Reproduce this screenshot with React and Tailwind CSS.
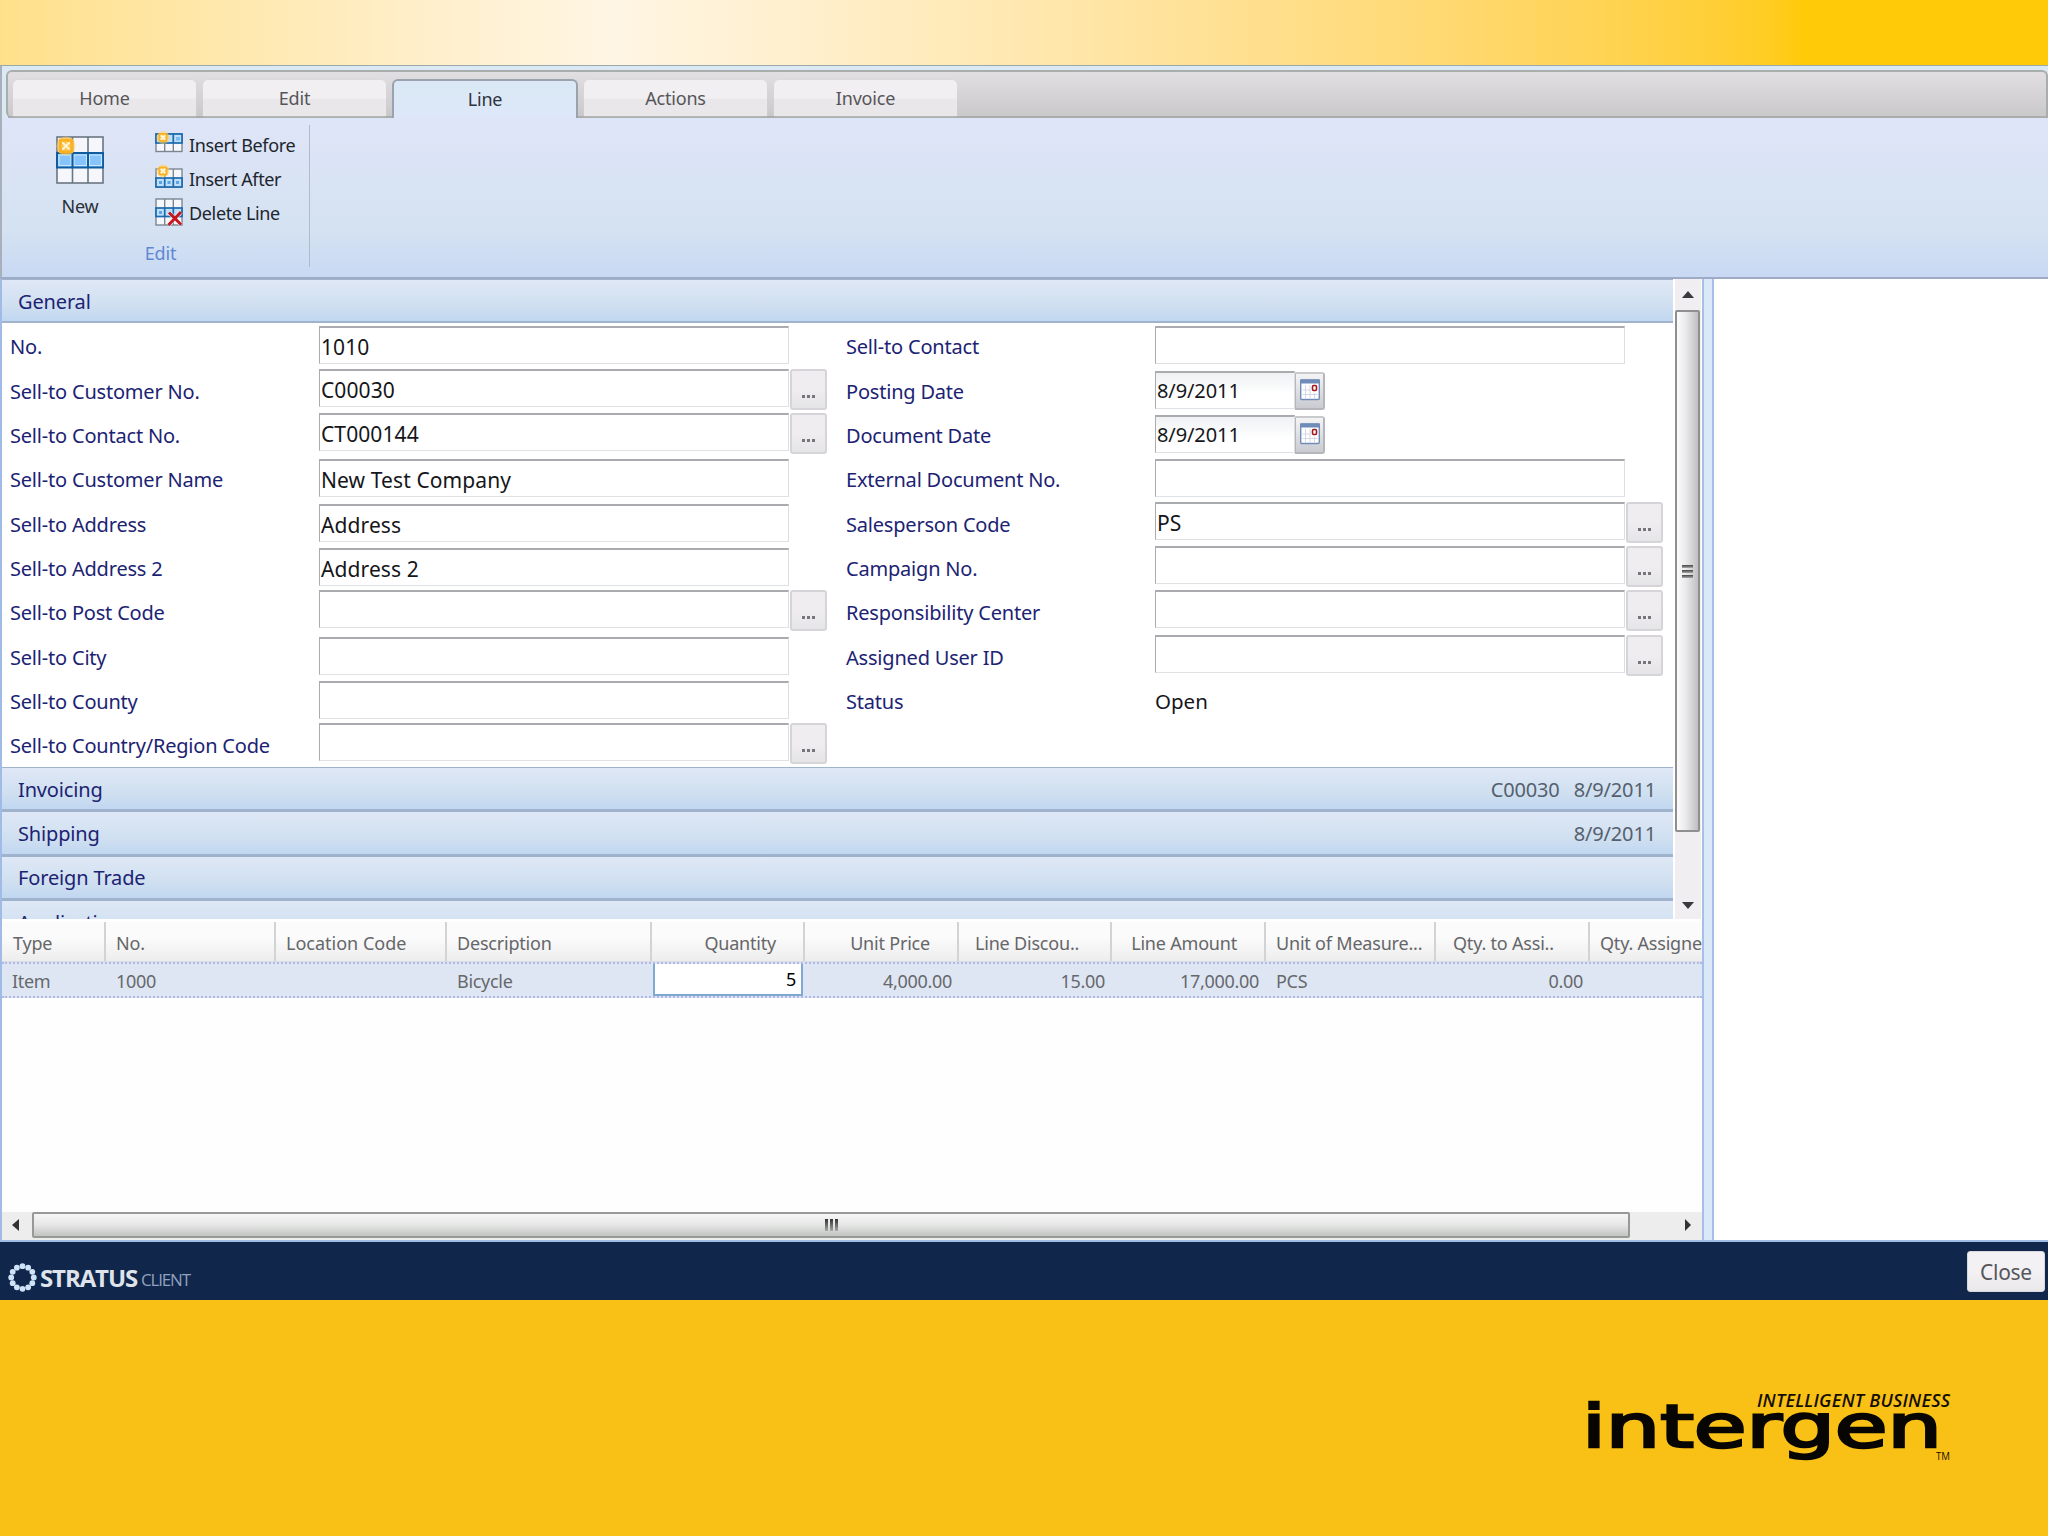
import React from 'react'

const tabs = ['Home', 'Edit', 'Line', 'Actions', 'Invoice']

const leftFields = [
    {label: 'No.', value: '1010'},
    {label: 'Sell-to Customer No.', value: 'C00030', type: 'lookup'},
    {label: 'Sell-to Contact No.', value: 'CT000144', type: 'lookup'},
    {label: 'Sell-to Customer Name', value: 'New Test Company'},
    {label: 'Sell-to Address', value: 'Address'},
    {label: 'Sell-to Address 2', value: 'Address 2'},
    {label: 'Sell-to Post Code', value: '', type: 'lookup'},
    {label: 'Sell-to City', value: ''},
    {label: 'Sell-to County', value: ''},
    {label: 'Sell-to Country/Region Code', value: '', type: 'lookup'},
]

const rightFields = [
    {label: 'Sell-to Contact', value: ''},
    {label: 'Posting Date', value: '8/9/2011', type: 'date'},
    {label: 'Document Date', value: '8/9/2011', type: 'date'},
    {label: 'External Document No.', value: ''},
    {label: 'Salesperson Code', value: 'PS', type: 'lookup'},
    {label: 'Campaign No.', value: '', type: 'lookup'},
    {label: 'Responsibility Center', value: '', type: 'lookup'},
    {label: 'Assigned User ID', value: '', type: 'lookup'},
    {label: 'Status', value: 'Open', type: 'text'},
]

const columns = [
    {title: 'Type', value: 'Item', width: 'w-[104px]', head: 'pl-[11px]', cell: 'pl-[10px]'},
    {title: 'No.', value: '1000', width: 'w-[170px]', head: 'pl-[10px]', cell: 'pl-[10px]'},
    {title: 'Location Code', value: '', width: 'w-[171px]', head: 'pl-[10px] tracking-[0px]', cell: 'pl-[10px]'},
    {title: 'Description', value: 'Bicycle', width: 'w-[205px]', head: 'pl-[10px]', cell: 'pl-[10px]'},
    {title: 'Quantity', value: '5', width: 'w-[153px]', head: 'justify-end pr-[27px]', edit: true},
    {title: 'Unit Price', value: '4,000.00', width: 'w-[154px]', head: 'justify-end pr-[27px]', cell: 'justify-end pr-[7px]'},
    {title: 'Line Discou..', value: '15.00', width: 'w-[153px]', head: 'pl-[16px]', cell: 'justify-end pr-[7px]'},
    {title: 'Line Amount', value: '17,000.00', width: 'w-[154px]', head: 'justify-end pr-[27px]', cell: 'justify-end pr-[7px]'},
    {title: 'Unit of Measure...', value: 'PCS', width: 'w-[170px]', head: 'pl-[10px]', cell: 'pl-[10px]'},
    {title: 'Qty. to Assi..', value: '0.00', width: 'w-[154px]', head: 'pl-[17px]', cell: 'justify-end pr-[7px]'},
    {title: 'Qty. Assigned', value: '', width: 'w-[160px]', head: 'pl-[10px]', cell: ''},
]

function Star({x, y, r}) {
    return (
        <g transform={`translate(${x} ${y})`}>
            <circle r={r + 2} fill="#ffd262" opacity="0.55" />
            <rect x={-r} y={-r} width={r * 2} height={r * 2} rx="2" fill="#fbb124" />
            <circle r={r * 0.6} fill="#ffc95c" />
            <path d={`M${-r / 2} ${-r / 2}L${r / 2} ${r / 2}M${r / 2} ${-r / 2}L${-r / 2} ${r / 2}`} stroke="#fff6d8" strokeWidth="1.8" />
        </g>
    )
}

function NewIcon() {
    return (
        <svg width="56" height="56" viewBox="0 0 56 56">
            <rect x="5" y="6" width="46" height="46" fill="#f5f7fd" stroke="#6b7682" strokeWidth="1.6" />
            <path d="M20.500 6v46M36 6v46" stroke="#6b7682" strokeWidth="1.6" />
            <rect x="5" y="22" width="46" height="14.500" fill="#86c4fb" stroke="#0f5c9f" strokeWidth="2" />
            <path d="M7 24h12v10.500H7zM22 24h12.500v10.500H22zM37.500 24h12v10.500h-12z" fill="none" stroke="#c9e6ff" strokeWidth="1.200" />
            <path d="M20.500 22v15M36 22v15" stroke="#0f5c9f" strokeWidth="2" />
            <Star x={14} y={15} r={7.5} />
        </svg>
    )
}

function InsertBeforeIcon() {
    return (
        <svg width="30" height="30" viewBox="0 0 30 30">
            <rect x="2" y="4" width="26" height="17.500" fill="#f5f7fd" stroke="#7c8692" strokeWidth="1.400" />
            <path d="M10.700 13v8.500M19.300 13v8.500" stroke="#7c8692" strokeWidth="1.400" />
            <rect x="2" y="4" width="26" height="9" fill="#bfe0fb" stroke="#1c69ad" strokeWidth="1.700" />
            <path d="M10.700 4v9M19.300 4v9" stroke="#1c69ad" strokeWidth="1.700" />
            <path d="M22 7h4v3.500h-4z" fill="#7dbcf2" />
            <Star x={9} y={7.500} r={4.500} />
        </svg>
    )
}

function InsertAfterIcon() {
    return (
        <svg width="30" height="30" viewBox="0 0 30 30">
            <rect x="2" y="5" width="26" height="18" fill="#f5f7fd" stroke="#7c8692" strokeWidth="1.400" />
            <path d="M10.700 5v9M19.300 5v9" stroke="#7c8692" strokeWidth="1.400" />
            <rect x="2" y="14" width="26" height="9" fill="#bfe0fb" stroke="#1c69ad" strokeWidth="1.700" />
            <path d="M10.700 14v9M19.300 14v9" stroke="#1c69ad" strokeWidth="1.700" />
            <path d="M5 17h3v3H5zM13.500 17h3v3h-3zM22 17h3v3h-3z" fill="#5ba5e3" />
            <Star x={9} y={7} r={4.500} />
        </svg>
    )
}

function DeleteLineIcon() {
    return (
        <svg width="30" height="30" viewBox="0 0 30 30">
            <rect x="2" y="1" width="26" height="26" fill="#f5f7fd" stroke="#7c8692" strokeWidth="1.400" />
            <path d="M10.700 1v26M19.300 1v26" stroke="#7c8692" strokeWidth="1.400" />
            <rect x="2" y="10" width="26" height="8.500" fill="#bfe0fb" stroke="#1c69ad" strokeWidth="1.700" />
            <path d="M10.700 10v8.500M19.300 10v8.500" stroke="#1c69ad" strokeWidth="1.700" />
            <path d="M5 13h3v3H5z" fill="#5ba5e3" />
            <path d="M15 14.500l12 12M27 14l-12.500 13" stroke="#fff" strokeWidth="4.500" opacity="0.6" />
            <path d="M15 14.500l12 12M27 14l-12.500 13" stroke="#c5171c" strokeWidth="3" />
        </svg>
    )
}

function CalendarIcon() {
    return (
        <svg width="20" height="22" viewBox="0 0 20 22">
            <rect x="0.700" y="1" width="18.600" height="19.500" rx="1" fill="#fff" stroke="#6f8cb8" strokeWidth="1.400" />
            <rect x="0" y="0.500" width="20" height="4" fill="#6f8cb8" />
            <path d="M5.500 6v13M10 6v13M14.500 14v5M2.500 11h8M2.500 15.500h15" stroke="#d3d8e2" strokeWidth="1" />
            <rect x="12.500" y="6.500" width="4" height="5" rx="1.200" fill="#fff" stroke="#a5161b" strokeWidth="1.600" />
        </svg>
    )
}

function Tab({title}) {
    if (title === 'Line') {
        return (
            <div className="w-[186px] h-[39px] -mx-px rounded-t-[6px] border-2 border-b-0 border-[#9aa3ad] bg-linear-to-b from-[#dae9f5] to-[#dde7f8] flex items-center justify-center text-[#2d3440]">
                {title}
            </div>
        )
    }
    return (
        <div className="w-[183px] h-[36px] mb-[2px] pt-px rounded-t-[5px] bg-linear-to-b from-[#f1eff1] from-50% to-[#e9e7e9] to-55% shadow-[0_0_2px_#d8d6d8] flex items-center justify-center text-[#565559]">
            {title}
        </div>
    )
}

function Ribbon() {
    return (
        <div className="h-[214px] border-t border-b-2 border-l-2 border-t-[#9ba9ab] border-l-[#a8b0bb] border-b-[#9fabc6] bg-[#dbe9f4] pt-[4px] flex flex-col text-[18px] tracking-[-0.2px]">
            <div className="ml-[4px] h-[48px] shrink-0 rounded-l-[6px] rounded-tr-[6px] border-2 border-b-0 border-[#a9adac] bg-linear-to-b from-[#e2dfe2] to-[#c9c8c9] flex flex-col justify-end relative">
                <div className="absolute left-0 right-0 bottom-0 h-[2px] bg-[#a9adac]"></div>
                <div className="relative flex items-end gap-[7px] pl-[5px]">
                    {tabs.map((tab) => (
                        <Tab key={tab} title={tab} />
                    ))}
                </div>
            </div>
            <div className="flex-1 flex pt-[7px] bg-linear-to-b from-[#dfe5f8] via-[#d4e2f1] via-70% to-[#c9d9f4]">
                <div className="w-[308px] h-[142px] border-r border-[#b3bcc4] flex flex-col">
                    <div className="flex h-[114px]">
                        <div className="w-[157px] flex flex-col items-center pt-[6px] pr-[2px] text-[#2a2f38]">
                            <NewIcon />
                            <div className="mt-[6px] leading-[26px] pl-px">New</div>
                        </div>
                        <div className="flex flex-col pt-[3px] text-[#20252e] -ml-[5px] tracking-[-0.35px]">
                            <div className="flex h-[34px] items-center gap-[5px]"><InsertBeforeIcon />Insert Before</div>
                            <div className="flex h-[34px] items-center gap-[5px]"><InsertAfterIcon />Insert After</div>
                            <div className="flex h-[34px] items-center gap-[5px]"><DeleteLineIcon />Delete Line</div>
                        </div>
                    </div>
                    <div className="text-center text-[#5f88d3] leading-[34px] pt-[6px] pl-[10px]">Edit</div>
                </div>
            </div>
        </div>
    )
}

function FieldInput({width, value, date}) {
    return (
        <div className={`${width} h-[38px] shrink-0 border border-t-2 border-t-[#a9abaf] border-l-[#a9abaf] border-r-[#dcdee0] border-b-[#dfe2e5] ${date ? 'bg-linear-to-b from-[#eff1f3] to-white to-60% text-[20px] leading-[35px] tracking-[-0.1px]' : 'bg-white text-[21px] leading-[38px] tracking-[0.1px]'} text-[#15161a] pl-px whitespace-nowrap`}>
            {value}
        </div>
    )
}

function LookupButton() {
    return (
        <div className="w-[37px] h-[41px] ml-px shrink-0 rounded-[3px] border-2 border-[#d6d4d8] bg-linear-to-b from-[#efedf0] from-50% to-[#e5e4e7] flex items-end justify-center gap-[2px] pb-[10px]">
            <i className="w-[3px] h-[3px] bg-[#77747a]"></i>
            <i className="w-[3px] h-[3px] bg-[#77747a]"></i>
            <i className="w-[3px] h-[3px] bg-[#77747a]"></i>
        </div>
    )
}

function Field({field, labelWidth}) {
    const {label, value, type} = field
    return (
        <div className={`flex h-[44.35px] ${type === 'lookup' ? 'pt-px' : 'pt-[3px]'}`}>
            <div className={`${labelWidth} shrink-0 text-[20px] tracking-[-0.2px] text-[#1c2373] ${type === 'lookup' ? 'leading-[45px]' : 'leading-[41px]'}`}>{label}</div>
            {type === 'text' && <div className="text-[20.5px] text-[#15161a] leading-[41px]">{value}</div>}
            {type === 'date' && (
                <div className="flex">
                    <FieldInput width="w-[140px]" value={value} date />
                    <div className="w-[30px] h-[38px] mt-px border-2 border-l border-[#b4b6bc] border-t-[#c9cacd] rounded-r-[3px] bg-linear-to-b from-[#f4f4f5] to-[#c9cbd1] flex justify-center pt-[5px]">
                        <CalendarIcon />
                    </div>
                </div>
            )}
            {type !== 'text' && type !== 'date' && <FieldInput width="w-[470px]" value={value} />}
            {type === 'lookup' && <LookupButton />}
        </div>
    )
}

function SectionBar({title, children}) {
    return (
        <div className="h-[44.35px] shrink-0 border-t-[1.5px] border-b-2 border-[#9fb3cd] bg-linear-to-b from-[#dfe8f6] via-[#d0e0f0] via-60% to-[#c1d7f1] flex items-center justify-between pt-[2px] pl-[16px] pr-[17px] text-[20px] tracking-[-0.15px] text-[#1c2373]">
            <span>{title}</span>
            <span className="flex gap-[14px] text-[#55606e]">{children}</span>
        </div>
    )
}

function VerticalScroll() {
    return (
        <div className="w-[26px] ml-[2px] shrink-0 bg-[#f0eef0] flex flex-col items-center justify-between">
            <svg width="26" height="31" viewBox="0 0 26 31">
                <path d="M13 12l6 7H7z" fill="#3a3a3e" />
            </svg>
            <div className="w-[25px] h-[522px] mr-px rounded-[2px] border-2 border-[#8f8f92] bg-linear-to-r from-[#fbfbfb] via-[#ebebec] via-40% to-[#bfbfc2] flex flex-col items-center justify-center gap-[2px]">
                <i className="w-[11px] h-[3px] bg-linear-to-b from-[#444] to-[#aaa]"></i>
                <i className="w-[11px] h-[3px] bg-linear-to-b from-[#444] to-[#aaa]"></i>
                <i className="w-[11px] h-[3px] bg-linear-to-b from-[#444] to-[#aaa]"></i>
            </div>
            <div className="flex-1"></div>
            <svg width="26" height="28" viewBox="0 0 26 28">
                <path d="M7 11h12l-6 7z" fill="#3a3a3e" />
            </svg>
        </div>
    )
}

function HorizontalScroll() {
    return (
        <div className="h-[28px] shrink-0 bg-[#ededee] flex items-start">
            <svg width="30" height="27" viewBox="0 0 30 27">
                <path d="M17 7v12l-7-6z" fill="#333" />
            </svg>
            <div className="w-[1598px] h-[26px] rounded-[2px] border-2 border-[#979997] bg-linear-to-b from-[#f6f6f6] via-[#e6e7e6] via-48% to-[#c2c4c2] flex items-center justify-center gap-[2px]">
                <i className="w-[3px] h-[12px] bg-linear-to-b from-[#333] to-[#aaa]"></i>
                <i className="w-[3px] h-[12px] bg-linear-to-b from-[#333] to-[#aaa]"></i>
                <i className="w-[3px] h-[12px] bg-linear-to-b from-[#333] to-[#aaa]"></i>
            </div>
            <div className="flex-1"></div>
            <svg width="22" height="27" viewBox="0 0 22 27">
                <path d="M5 7v12l6-6z" fill="#333" />
            </svg>
        </div>
    )
}

function LinesGrid() {
    return (
        <div className="flex-1 min-h-0 bg-[#fdfefd] pt-[3px] flex flex-col overflow-hidden text-[18px]">
            <div className="flex h-[40px] shrink-0 bg-linear-to-b from-[#fbfbfb] from-40% to-[#ededed] text-[#65666a] border-b border-[#dcdce4]">
                {columns.map((col) => (
                    <div key={col.title} className={`${col.width} ${col.head} shrink-0 h-full border-r-2 border-[#d2d3d4] flex items-center whitespace-nowrap tracking-[-0.2px] pt-[4px]`}>
                        {col.title}
                    </div>
                ))}
            </div>
            <div className="flex h-[36px] shrink-0 bg-[#dfe6f3] border-y-2 border-dotted border-[#b0b9e6] text-[#66686c]">
                {columns.map((col) => (
                    <div key={col.title} className={`${col.width} ${col.edit ? 'pl-px pr-[2px]' : col.cell} ${col.edit ? '' : 'pt-[2px]'} shrink-0 h-full flex items-center tracking-[-0.3px]`}>
                        {col.edit ? (
                            <div className="flex-1 h-[32px] border-2 border-t-0 border-[#7fa9d2] bg-white text-black text-right leading-[30px] pr-[5px]">{col.value}</div>
                        ) : col.value}
                    </div>
                ))}
            </div>
        </div>
    )
}

function StratusLogo() {
    const dots = Array.from({length: 12}, (_, i) => (i * Math.PI) / 6)
    return (
        <div className="flex items-end pl-[8px] pb-[7px]">
            <svg width="29" height="29" viewBox="-14.500 -14.500 29 29" className="mb-px">
                {dots.map((a) => (
                    <circle key={a} cx={Math.cos(a) * 11.3} cy={Math.sin(a) * 11.3} r="2.900" fill="#cfe3f8" />
                ))}
            </svg>
            <span className="ml-[3px] font-['Open_Sans'] font-bold text-[24px] leading-[30px] tracking-[-1.1px] text-[#dfe4ec]">STRATUS</span>
            <span className="ml-[4px] font-['Open_Sans'] text-[17px] leading-[27px] tracking-[-1.2px] text-[#8fa1be]">CLIENT</span>
        </div>
    )
}

function IntergenLogo() {
    return (
        <svg width="372" height="80" viewBox="0 0 372 80">
            <text x="174" y="20" textLength="193" className="font-['Open_Sans'] italic font-semibold text-[18px]" fill="#140e02">INTELLIGENT BUSINESS</text>
            <text x="-1" y="60" textLength="360" lengthAdjust="spacingAndGlyphs" className="font-['DejaVu_Sans'] text-[59px]" fill="#080602" stroke="#080602" strokeWidth="2.500">intergen</text>
            <text x="353" y="73" textLength="14" lengthAdjust="spacingAndGlyphs" className="font-['Open_Sans'] text-[11px]" fill="#140e02">TM</text>
        </svg>
    )
}

function App() {
    return (
        <div className="w-[2048px] h-[1536px] overflow-hidden bg-[#f9c016] font-['Noto_Sans',sans-serif] flex flex-col">
            <div className="h-[65px] shrink-0 bg-linear-to-r from-[#ffe08a] via-[#fff5e4] via-30% to-[#ffcb08] to-88%"></div>
            <Ribbon />
            <div className="h-[963px] shrink-0 flex border-l-2 border-b-2 border-[#9fbbe6] bg-[#dbe7f6]">
                <div className="w-[1700px] shrink-0 flex flex-col bg-white">
                    <div className="h-[640px] shrink-0 flex overflow-hidden">
                        <div className="w-[1671px] h-full flex flex-col shrink-0">
                            <SectionBar title="General" />
                            <div className="flex h-[443.500px] shrink-0">
                                <div className="w-[837px] pl-[8px]">
                                    {leftFields.map((field) => (
                                        <Field key={field.label} field={field} labelWidth="w-[309px]" />
                                    ))}
                                </div>
                                <div className="pl-[7px]">
                                    {rightFields.map((field) => (
                                        <Field key={field.label} field={field} labelWidth="w-[309px]" />
                                    ))}
                                </div>
                            </div>
                            <SectionBar title="Invoicing">
                                <span>C00030</span>
                                <span>8/9/2011</span>
                            </SectionBar>
                            <SectionBar title="Shipping">
                                <span>8/9/2011</span>
                            </SectionBar>
                            <SectionBar title="Foreign Trade" />
                            <SectionBar title="Application" />
                        </div>
                        <VerticalScroll />
                    </div>
                    <LinesGrid />
                    <HorizontalScroll />
                </div>
                <div className="w-[12px] shrink-0 border-x-2 border-[#a5bfe8] bg-[#dbe8f7]"></div>
                <div className="flex-1 bg-white"></div>
            </div>
            <div className="h-[58px] shrink-0 bg-[#10264b] flex items-end justify-between">
                <StratusLogo />
                <div className="w-[78px] h-[41px] mr-[3px] mb-[8px] rounded-[3px] border border-[#d9d8df] bg-linear-to-b from-[#f3f1f4] from-50% to-[#e9e8ea] text-[21px] leading-[40px] text-center text-[#55565c] tracking-[-0.300px]">
                    Close
                </div>
            </div>
            <div className="flex-1 flex justify-end pt-[87px] pr-[93px]">
                <IntergenLogo />
            </div>
        </div>
    )
}

export default App
